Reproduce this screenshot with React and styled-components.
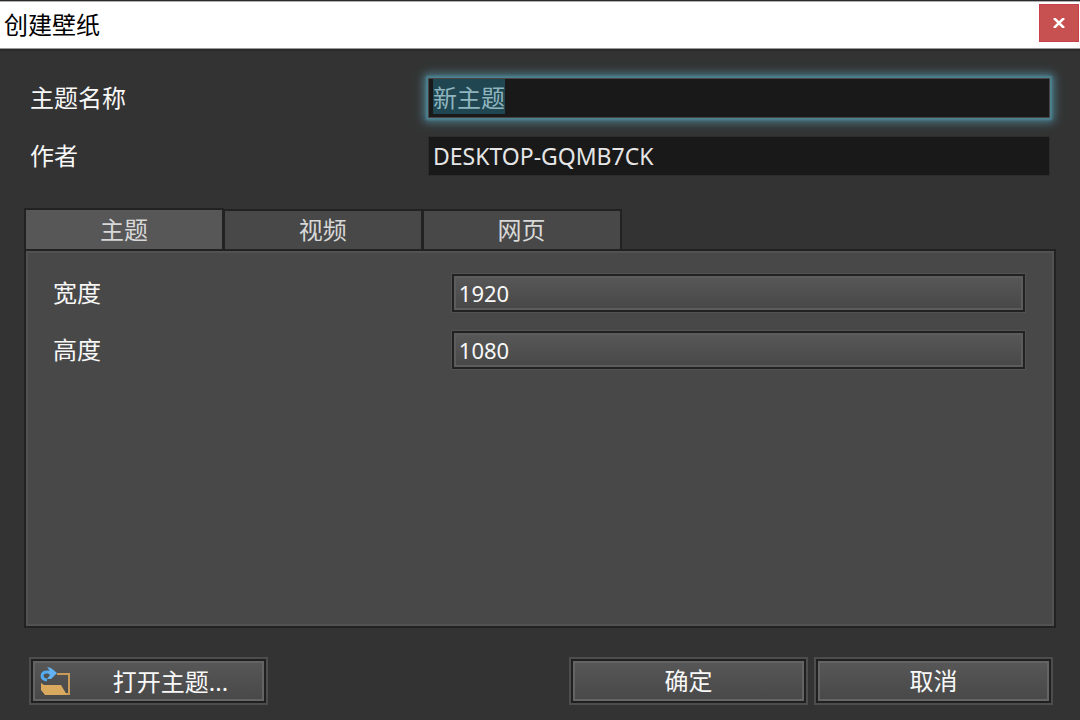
import React, { useEffect, useRef, useState } from "react";
import styled, { createGlobalStyle } from "styled-components";

const GlobalStyle = createGlobalStyle`
  *, *::before, *::after { box-sizing: border-box; }
  body { margin: 0; background: #333333; }
  body, button, input {
    font-family: "Noto Sans", "Noto Sans CJK SC", sans-serif;
    font-size: 24px;
    line-height: 28px;
  }
`;

const Dialog = styled.div`
  display: flex;
  flex-direction: column;
  min-height: 100vh;
  color: #f8f8f8;
  background: #333333;
  border-top: 1px solid #2a2a2e;
`;

const TitleBar = styled.header`
  display: flex;
  align-items: center;
  justify-content: space-between;
  height: 48px;
  padding: 0 1px 0 4px;
  background: #ffffff;
  border-top: 1px solid #b0b0b0;
  border-bottom: 1px solid #9a9a9a;
  box-shadow: 0 2px 0 #2a2a2a;
`;

const Title = styled.h1`
  margin: 0;
  font-size: 24px;
  font-weight: 400;
  color: #000000;
`;

const CloseButton = styled.button`
  display: flex;
  align-items: center;
  justify-content: center;
  width: 40px;
  height: 38px;
  margin-bottom: 4px;
  padding: 0;
  color: #ffffff;
  background: #c75050;
  border: 1px solid #c8414a;
`;

const Form = styled.form`
  display: flex;
  flex: 1;
  flex-direction: column;
  padding: 29px 24px 15px;
`;

const Fields = styled.div`
  display: grid;
  grid-template-columns: 398fr 622fr;
  gap: 18px 0;
  margin: 0 6px;
  align-items: center;
`;

const SizeFields = styled.div`
  display: grid;
  grid-template-columns: 398fr 572fr;
  gap: 19px 0;
  align-items: center;
`;

const Label = styled.label`
  justify-self: start;
`;

const TextInput = styled.input`
  width: 100%;
  height: 40px;
  padding: 0 4px;
  color: #e6e6e6;
  font-size: 23px;
  background: #191919;
  border: 1px solid #2c2c2c;
  border-radius: 0;
  outline: none;

  &:focus {
    padding-bottom: 4px;
    font-family: "Liberation Sans", "Noto Sans CJK SC", sans-serif;
    font-size: 24px;
    border-color: #4a4545;
    box-shadow: 0 0 2px 2px #4d8291, 0 0 9px 4px #4d8291;
  }

  &::selection {
    color: #8fb5bf;
    background: #1f4651;
  }
`;

const SizeInput = styled.input`
  width: 100%;
  height: 38px;
  padding: 0 5px;
  color: #f8f8f8;
  font-size: 22px;
  background: linear-gradient(#585858, #474747);
  border: 2px solid #222222;
  border-radius: 0;
  outline: none;
  box-shadow: 0 0 0 1px #525252, inset 0 0 0 2px #5c5c5c;
`;

const Tabs = styled.div`
  display: flex;
  align-items: flex-end;
  width: 58%;
  margin-top: 32px;
`;

const Tab = styled.button`
  flex: 1;
  height: ${(p) => (p.$active ? 41 : 40)}px;
  margin-right: -1px;
  padding: 0;
  color: #d8d8d8;
  background: ${(p) => (p.$active ? "#575757" : "#484848")};
  border: 2px solid #222222;
  border-bottom: 0;

  &:last-child {
    margin-right: 1px;
  }
`;

const Panel = styled.section`
  flex: 1;
  padding: 23px 29px 23px 27px;
  background: #484848;
  border: 2px solid #222222;
  box-shadow: inset 0 0 0 2px #525252;
`;

const Footer = styled.footer`
  display: flex;
  justify-content: space-between;
  margin-top: 29px;
  padding: 0 3px 0 5px;
`;

const Actions = styled.div`
  display: flex;
  gap: 6px;
`;

const Button = styled.button`
  display: flex;
  align-items: center;
  width: 239px;
  height: 48px;
  padding: 0 8px;
  color: #f8f8f8;
  background: linear-gradient(#585858, #474747) padding-box;
  border: 2px solid #4d4d4d;
  box-shadow: inset 0 0 0 2px #202020, inset 0 0 0 4px #646464;
`;

const OpenButton = styled(Button)`
  gap: 12px;
  padding: 2px 8px 0;
`;

const ButtonText = styled.span`
  flex: 1;
  text-align: center;
`;

const FolderIcon = () => (
  <svg width="32" height="30" viewBox="0 0 32 30" aria-hidden="true">
    <path d="M18 7H30V27H26" fill="none" stroke="#c99b57" strokeWidth="2" />
    <path d="M2 16L5 18H22L28 28H6L2 23Z" fill="#daa960" />
    <path d="M8 13C1 12 2 5 8 5H13" fill="none" stroke="#55a9ee" strokeWidth="3" />
    <path d="M8 0L12 1L18 6L12 12H8L11 8L8 5L11 4Z" fill="#62b2f4" />
  </svg>
);

const CloseIcon = () => (
  <svg width="12" height="10" viewBox="0 0 12 10" aria-hidden="true">
    <path d="M1 0L11 10M11 0L1 10" stroke="currentColor" strokeWidth="2.5" />
  </svg>
);

const tabs = ["主题", "视频", "网页"];

export default function App() {
  const nameRef = useRef(null);
  const [active, setActive] = useState(0);

  useEffect(() => {
    nameRef.current.focus();
    nameRef.current.select();
  }, []);

  return (
    <>
      <GlobalStyle />
      <Dialog role="dialog" aria-labelledby="title">
        <TitleBar>
          <Title id="title">创建壁纸</Title>
          <CloseButton type="button" aria-label="关闭">
            <CloseIcon />
          </CloseButton>
        </TitleBar>
        <Form onSubmit={(e) => e.preventDefault()}>
          <Fields>
            <Label htmlFor="name">主题名称</Label>
            <TextInput id="name" ref={nameRef} defaultValue="新主题" />
            <Label htmlFor="author">作者</Label>
            <TextInput id="author" defaultValue="DESKTOP-GQMB7CK" />
          </Fields>
          <Tabs role="tablist">
            {tabs.map((name, i) => (
              <Tab
                key={name}
                type="button"
                role="tab"
                aria-selected={i === active}
                $active={i === active}
                onClick={() => setActive(i)}
              >
                {name}
              </Tab>
            ))}
          </Tabs>
          <Panel role="tabpanel">
            <SizeFields>
              <Label htmlFor="width">宽度</Label>
              <SizeInput id="width" defaultValue="1920" />
              <Label htmlFor="height">高度</Label>
              <SizeInput id="height" defaultValue="1080" />
            </SizeFields>
          </Panel>
          <Footer>
            <OpenButton type="button">
              <FolderIcon />
              <ButtonText>打开主题...</ButtonText>
            </OpenButton>
            <Actions>
              <Button type="submit">
                <ButtonText>确定</ButtonText>
              </Button>
              <Button type="button">
                <ButtonText>取消</ButtonText>
              </Button>
            </Actions>
          </Footer>
        </Form>
      </Dialog>
    </>
  );
}
